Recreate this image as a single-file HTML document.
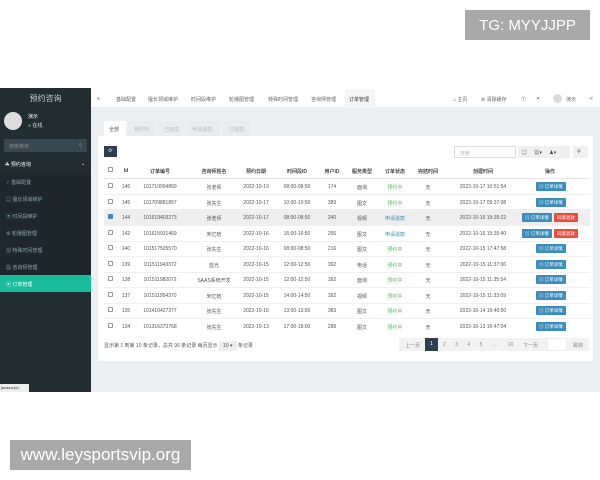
<!DOCTYPE html>
<html><head><meta charset="utf-8"><style>
*{margin:0;padding:0;box-sizing:border-box}
body{width:600px;height:480px;background:#fff;position:relative;overflow:hidden;font-family:"Liberation Sans","Noto Sans CJK SC",sans-serif;font-size:5px;color:#555}
.a{position:absolute;white-space:nowrap}
.wm{position:absolute;background:#a9a9a9;color:#fff;display:flex;align-items:center;justify-content:center}
.side{position:absolute;left:0;top:88px;width:91px;height:304px;background:#222d32}
.c{position:absolute;transform:translateX(-50%);white-space:nowrap}
.btn{position:absolute;height:9px;background:#3c8dbc;color:#fff;font-size:4.5px;line-height:9px;padding:0 3px;border-radius:1px}
.red{background:#e74c3c}
.cb{position:absolute;width:5px;height:5px;border:1px solid #999;border-radius:1px;background:#fff}
</style></head><body>
<div class="wm" style="left:465px;top:10px;width:125px;height:30px;font-size:15px">TG: MYYJJPP</div>
<div class="wm" style="left:10px;top:440px;width:181px;height:30px;font-size:17px">www.leysportsvip.org</div>

<div class="side">
 <div class="a" style="left:0;width:91px;text-align:center;top:5px;font-size:8px;color:#ccc">预约咨询</div>
 <div class="a" style="left:4px;top:24px;width:18px;height:18px;border-radius:50%;background:#ddd"></div>
 <div class="a" style="left:28px;top:25px;color:#fff">演示</div>
 <div class="a" style="left:28px;top:34px;color:#ddd"><span style="color:#2ecc71">●</span> 在线</div>
 <div class="a" style="left:4px;top:51px;width:83px;height:13px;background:#374850;color:#888;padding:4px 5px">搜索菜单<span style="float:right">⚲</span></div>
 <div class="a" style="left:5px;top:73px;color:#fff">☘ 预约咨询<span style="position:absolute;left:76px">⌄</span></div>
 <div class="a" style="left:0;top:85px;width:91px;height:119px;background:#1e282c"></div>
 <div class="a" style="left:6px;top:91px;color:#8aa4af">♀ 基础配置</div>
 <div class="a" style="left:6px;top:108px;color:#8aa4af">▤ 擅长领域维护</div>
 <div class="a" style="left:6px;top:125px;color:#8aa4af">▣ 时间段维护</div>
 <div class="a" style="left:6px;top:142px;color:#8aa4af">⚙ 轮播图管理</div>
 <div class="a" style="left:6px;top:159px;color:#8aa4af">▨ 特殊时间管理</div>
 <div class="a" style="left:6px;top:176px;color:#8aa4af">▦ 咨询师管理</div>
 <div class="a" style="left:0;top:187px;width:91px;height:17px;background:#1abc9c"></div>
 <div class="a" style="left:6px;top:193px;color:#fff">▣ 订单管理</div>
 <div class="a" style="left:0;top:296px;width:29px;height:8px;background:#eee;color:#333;font-size:4px;padding:1px">javascript:;</div>
</div>

<div class="a" style="left:91px;top:88px;width:509px;height:20px;background:#fff;border-bottom:1px solid #eee"></div>
<div class="a" style="left:345px;top:89px;width:30px;height:19px;background:#f5f5f5"></div>
<div class="a" style="left:97px;top:96px">≡</div>
<div class="a" style="left:116px;top:96px;color:#666">基础配置</div>
<div class="a" style="left:148px;top:96px;color:#666">擅长领域维护</div>
<div class="a" style="left:191px;top:96px;color:#666">时间段维护</div>
<div class="a" style="left:229px;top:96px;color:#666">轮播图管理</div>
<div class="a" style="left:268px;top:96px;color:#666">特殊时间管理</div>
<div class="a" style="left:311px;top:96px;color:#666">咨询师管理</div>
<div class="a" style="left:349px;top:96px;color:#333">订单管理</div>
<div class="a" style="left:453px;top:96px;color:#666">⌂ 主页</div>
<div class="a" style="left:481px;top:96px;color:#666">⊜ 清除缓存</div>
<div class="a" style="left:521px;top:96px;color:#666">Ⓣ</div>
<div class="a" style="left:536px;top:96px;color:#666">✕</div>
<div class="a" style="left:553px;top:94px;width:9px;height:9px;border-radius:50%;background:#ddd"></div>
<div class="a" style="left:566px;top:96px;color:#666">演示</div>
<div class="a" style="left:589px;top:96px;color:#666">≺</div>

<div class="a" style="left:91px;top:108px;width:509px;height:284px;background:#edf0f3"></div>
<div class="a" style="left:98px;top:121px;width:495px;height:240px;background:#fff"></div>
<div class="a" style="left:98px;top:108px;width:495px;height:28px;background:#edf0f3"></div>
<div class="a" style="left:104px;top:121px;width:22px;height:15px;background:#fff"></div>
<div class="a" style="left:109px;top:126px;color:#555">全部</div>
<div class="a" style="left:128px;top:121px;width:27px;height:15px;background:#e9ecef"></div><div class="a" style="left:134px;top:126px;color:#bbb">预约中</div>
<div class="a" style="left:158px;top:121px;width:27px;height:15px;background:#e9ecef"></div><div class="a" style="left:164px;top:126px;color:#bbb">已完成</div>
<div class="a" style="left:187px;top:121px;width:33px;height:15px;background:#e9ecef"></div><div class="a" style="left:192px;top:126px;color:#bbb">申请退款</div>
<div class="a" style="left:223px;top:121px;width:27px;height:15px;background:#e9ecef"></div><div class="a" style="left:229px;top:126px;color:#bbb">已退款</div>

<div class="a" style="left:104px;top:146px;width:13px;height:11px;background:#2c3e50;color:#fff;text-align:center;line-height:11px">⟳</div>
<div class="a" style="left:454px;top:146px;width:62px;height:12px;border:1px solid #ddd;color:#bbb;padding:3px 5px">搜索</div>
<div class="a" style="left:518px;top:146px;width:52px;height:12px;background:#f0f0f0;color:#444;padding:3px 4px;word-spacing:6px">▤ ▦▾ ♟▾</div>
<div class="a" style="left:573px;top:146px;width:15px;height:12px;background:#f0f0f0;color:#444;padding:3px 4px">⚲</div>

<div class="a" style="left:104px;top:178px;width:486px;height:1px;background:#e6e6e6"></div>
<div class="a" style="left:104px;top:209px;width:486px;height:16px;background:#eee"></div>
<div style="position:absolute;top:0;left:0;font-weight:bold;color:#444">
<div class="cb" style="left:108px;top:167px"></div>
<span class="c" style="left:126px;top:168px">Id</span><span class="c" style="left:160px;top:168px">订单编号</span><span class="c" style="left:214px;top:168px">咨询师姓名</span><span class="c" style="left:256px;top:168px">预约日期</span><span class="c" style="left:297px;top:168px">时间段ID</span><span class="c" style="left:332px;top:168px">用户ID</span><span class="c" style="left:362px;top:168px">服务类型</span><span class="c" style="left:395px;top:168px">订单状态</span><span class="c" style="left:428px;top:168px">完结时间</span><span class="c" style="left:483px;top:168px">创建时间</span><span class="c" style="left:550px;top:168px">操作</span>
</div>
<div id="rows"></div>
<div class="a" style="left:104px;top:342px;color:#555">显示第 1 到第 10 条记录，总共 96 条记录 每页显示 <span style="background:#eee;padding:2px 4px">10 ▾</span> 条记录</div>
<div class="a" style="left:399px;top:338px;width:190px;height:13px;background:#f2f2f2"></div>
<div class="a" style="left:405px;top:342px;color:#888">上一页</div>
<div class="a" style="left:425px;top:338px;width:13px;height:13px;background:#2c3e50;color:#fff;text-align:center;line-height:13px">1</div>
<div class="a" style="left:443px;top:342px;color:#888;word-spacing:8px">2 3 4 5</div>
<div class="a" style="left:493px;top:342px;color:#888">...</div>
<div class="a" style="left:508px;top:342px;color:#888">10</div>
<div class="a" style="left:523px;top:342px;color:#888">下一页</div>
<div class="a" style="left:547px;top:338px;width:20px;height:13px;background:#fff;border:1px solid #eee"></div>
<div class="a" style="left:573px;top:342px;color:#888">跳转</div>
<script>
var d=[["146","101710904869","张老师","2022-10-19","08:00-08:50","174","面询","预约中","2022-10-17 10:51:54"],
["145","101709881857","张先生","2022-10-17","10:00-10:50","389","图文","预约中","2022-10-17 09:37:08"],
["144","101619403273","张老师","2022-10-17","08:00-08:50","240","视频","申请退款","2022-10-16 19:35:22"],
["142","101615931469","朱忆晗","2022-10-16","16:00-16:50","256","图文","申请退款","2022-10-16 15:35:40"],
["140","101517505570","张先生","2022-10-16","08:00-08:50","216","图文","预约中","2022-10-15 17:47:58"],
["139","101511943372","蓝光","2022-10-15","12:00-12:50","392","电话","预约中","2022-10-15 11:37:06"],
["138","101511982072","SAAS系统开发","2022-10-15","12:00-12:50","392","面询","预约中","2022-10-15 11:35:54"],
["137","101511954370","朱忆晗","2022-10-15","14:00-14:50","392","视频","预约中","2022-10-15 11:33:09"],
["135","101410427377","张先生","2022-10-16","13:00-13:50","383","图文","预约中","2022-10-14 10:40:50"],
["134","101316373768","张先生","2022-10-13","17:00-18:00","288","图文","预约中","2022-10-13 16:47:04"]];
var xs=[126,160,214,256,297,332,362,395,428,483],h="";
d.forEach(function(r,i){var y=184+i*15.5;
h+='<div class="cb" style="left:108px;top:'+(y-1)+'px;'+(i==2?'background:#3c8dbc;border-color:#3c8dbc':'')+'"></div>';
var v=[r[0],r[1],r[2],r[3],r[4],r[5],r[6],r[7],"无",r[8]];
v.forEach(function(t,j){var col=j==7?(t=="预约中"?"#5cb85c":"#3c8dbc"):"#555";h+='<span class="c" style="left:'+xs[j]+'px;top:'+y+'px;color:'+col+'">'+t+'</span>';});
if(r[7]=="申请退款"){h+='<div class="btn" style="left:522px;top:'+(y-2)+'px">▤ 订单详情</div><div class="btn red" style="left:554px;top:'+(y-2)+'px">同意退款</div>';}
else h+='<div class="btn" style="left:536px;top:'+(y-2)+'px">▤ 订单详情</div>';
if(i<9)h+='<div class="a" style="left:104px;top:'+(y+10)+'px;width:486px;height:1px;background:#f0f0f0"></div>';});
document.getElementById("rows").innerHTML=h;
</script>
</body></html>
